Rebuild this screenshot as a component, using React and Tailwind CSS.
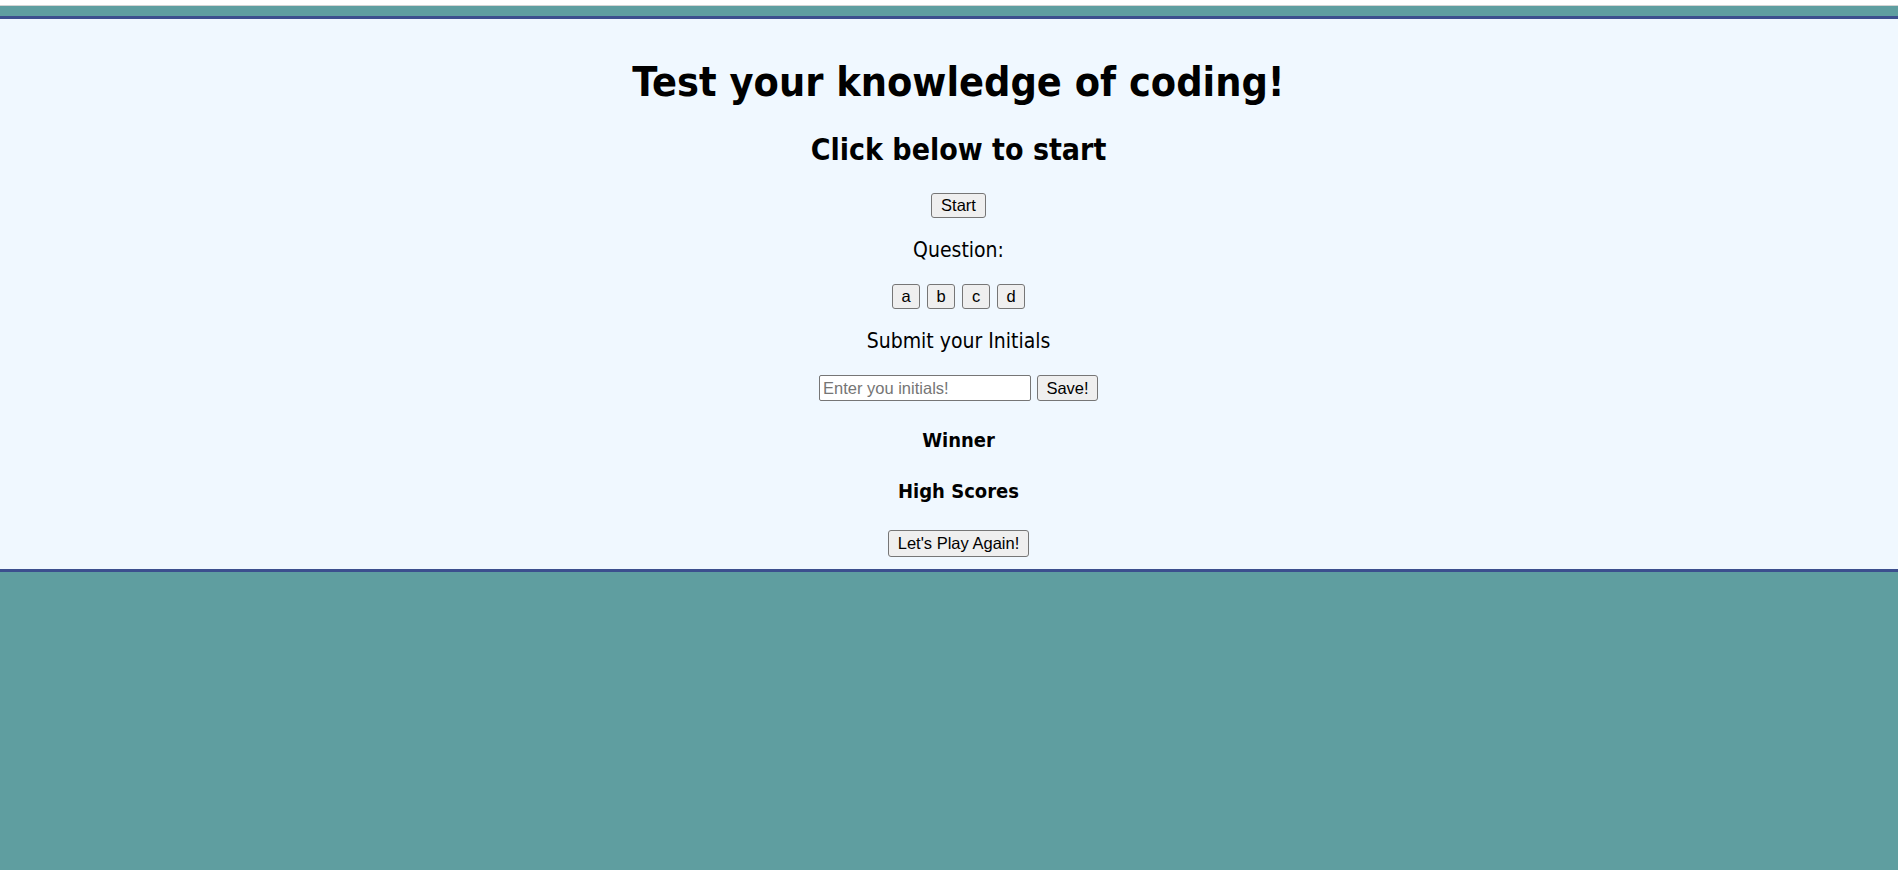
import React from 'react';

const btn =
  "flex items-center justify-center bg-[#efefef] border border-[#767676] rounded-[3px] text-black text-[16.5px] font-['Liberation_Sans',Arial,sans-serif] leading-none";

const App = () => {
  return (
    <div className="min-h-[870px] bg-[#5f9ea0]">
      <div className="h-[6px] bg-white border-b border-[#d4d4d4]" />
      <div className="pt-[10px]">
        <main className="bg-[#f0f8ff] border-y-[3px] border-[#3c4f8e] flex flex-col items-center pl-[19px] pt-[40px] pb-[12px] text-black font-['DejaVu_Sans_Condensed','DejaVu_Sans',sans-serif] font-stretch-condensed">
          <h1 className="text-[41px] leading-[47px] font-bold">Test your knowledge of coding!</h1>
          <h2 className="mt-[26px] text-[30px] leading-[35px] font-bold">Click below to start</h2>

          <button className={`${btn} mt-[26px] w-[55px] h-[25px]`}>Start</button>

          <p className="mt-[20px] text-[21px] leading-[24px]">Question:</p>

          <div className="mt-[22px] flex gap-[7px]">
            {['a', 'b', 'c', 'd'].map(choice => (
              <button key={choice} className={`${btn} w-[28px] h-[25px]`}>
                {choice}
              </button>
            ))}
          </div>

          <p className="mt-[20px] text-[21px] leading-[24px]">Submit your Initials</p>

          <div className="mt-[22px] flex gap-[6px]">
            <input
              type="text"
              placeholder="Enter you initials!"
              className="w-[212px] h-[26px] bg-white border border-[#767676] rounded-[2px] px-[3px] text-[16.5px] font-['Liberation_Sans',Arial,sans-serif] placeholder:text-[#757575] outline-none"
            />
            <button className={`${btn} w-[61px] h-[26px]`}>Save!</button>
          </div>

          <h4 className="mt-[28px] text-[20px] leading-[23px] font-bold">Winner</h4>
          <h4 className="mt-[28px] text-[20px] leading-[23px] font-bold">High Scores</h4>

          <button className={`${btn} mt-[27px] w-[141px] h-[27px]`}>Let's Play Again!</button>
        </main>
      </div>
    </div>
  );
};

export default App;
